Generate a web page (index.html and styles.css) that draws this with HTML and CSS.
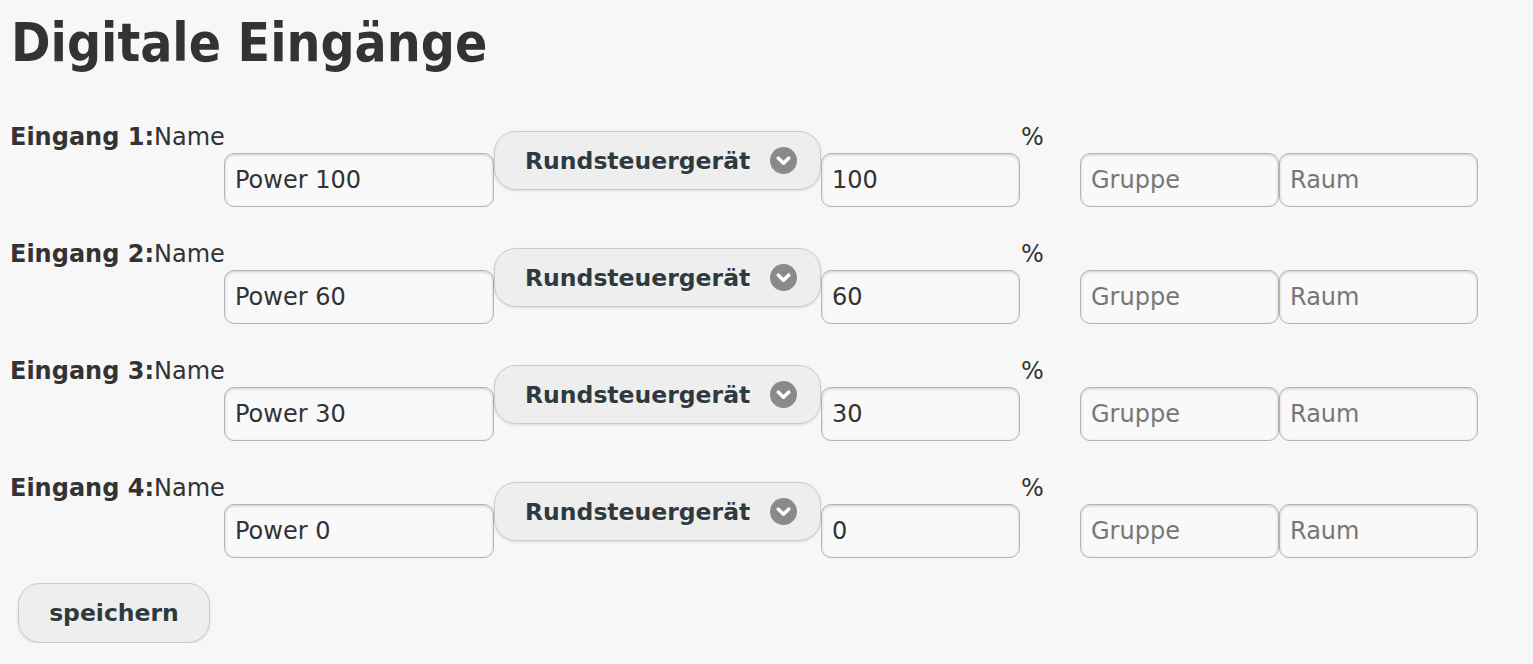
FILE: index.html
```html
<!DOCTYPE html>
<html lang="de">
<head>
<meta charset="utf-8">
<title>Digitale Eingänge</title>
<link rel="stylesheet" href="styles.css">
</head>
<body>
<div class="page">
  <h1 class="title">Digitale Eingänge</h1>
  <form class="rows">
    <div class="row">
      <div class="lbl"><b>Eingang 1:</b>Name</div>
      <input class="field name" type="text" value="Power 100">
      <div class="select"><span class="select-text">Rundsteuergerät</span><svg class="chev" viewBox="0 0 28 28" width="27" height="27"><circle cx="14" cy="14" r="14" fill="#8a8a8a"/><polyline points="8.5,11.5 14,16.8 19.5,11.5" fill="none" stroke="#fff" stroke-width="3.6" stroke-linecap="round" stroke-linejoin="round"/></svg></div>
      <input class="field num" type="text" value="100">
      <span class="pct">%</span>
      <input class="field small" type="text" placeholder="Gruppe">
      <input class="field small" type="text" placeholder="Raum">
    </div>
    <div class="row">
      <div class="lbl"><b>Eingang 2:</b>Name</div>
      <input class="field name" type="text" value="Power 60">
      <div class="select"><span class="select-text">Rundsteuergerät</span><svg class="chev" viewBox="0 0 28 28" width="27" height="27"><circle cx="14" cy="14" r="14" fill="#8a8a8a"/><polyline points="8.5,11.5 14,16.8 19.5,11.5" fill="none" stroke="#fff" stroke-width="3.6" stroke-linecap="round" stroke-linejoin="round"/></svg></div>
      <input class="field num" type="text" value="60">
      <span class="pct">%</span>
      <input class="field small" type="text" placeholder="Gruppe">
      <input class="field small" type="text" placeholder="Raum">
    </div>
    <div class="row">
      <div class="lbl"><b>Eingang 3:</b>Name</div>
      <input class="field name" type="text" value="Power 30">
      <div class="select"><span class="select-text">Rundsteuergerät</span><svg class="chev" viewBox="0 0 28 28" width="27" height="27"><circle cx="14" cy="14" r="14" fill="#8a8a8a"/><polyline points="8.5,11.5 14,16.8 19.5,11.5" fill="none" stroke="#fff" stroke-width="3.6" stroke-linecap="round" stroke-linejoin="round"/></svg></div>
      <input class="field num" type="text" value="30">
      <span class="pct">%</span>
      <input class="field small" type="text" placeholder="Gruppe">
      <input class="field small" type="text" placeholder="Raum">
    </div>
    <div class="row">
      <div class="lbl"><b>Eingang 4:</b>Name</div>
      <input class="field name" type="text" value="Power 0">
      <div class="select"><span class="select-text">Rundsteuergerät</span><svg class="chev" viewBox="0 0 28 28" width="27" height="27"><circle cx="14" cy="14" r="14" fill="#8a8a8a"/><polyline points="8.5,11.5 14,16.8 19.5,11.5" fill="none" stroke="#fff" stroke-width="3.6" stroke-linecap="round" stroke-linejoin="round"/></svg></div>
      <input class="field num" type="text" value="0">
      <span class="pct">%</span>
      <input class="field small" type="text" placeholder="Gruppe">
      <input class="field small" type="text" placeholder="Raum">
    </div>
    <div class="actions">
      <button class="btn" type="button">speichern</button>
    </div>
  </form>
</div>
</body>
</html>
```

FILE: styles.css
```css
html, body {
  margin: 0;
  background: #f7f7f7;
}
body {
  font-family: "DejaVu Sans", Verdana, sans-serif;
  color: #333;
  font-size: 24px;
}
.page {
  padding: 13px 0 0 10px;
}
.title {
  margin: 0 0 0 1px;
  font-family: "DejaVu Sans Condensed", "DejaVu Sans", sans-serif;
  font-weight: bold;
  font-size: 53px;
  line-height: 60px;
  color: #333;
}
.rows {
  margin: 51px 0 0 0;
  display: flex;
  flex-direction: column;
  gap: 34px;
}
.row {
  display: flex;
  align-items: flex-start;
  height: 83px;
}
.lbl {
  width: 214px;
  flex: none;
  line-height: 27px;
  white-space: nowrap;
}
.lbl b {
  font-weight: bold;
}
.field {
  flex: none;
  box-sizing: border-box;
  margin: 29px 0 0 0;
  height: 54px;
  padding: 0 10px;
  border: 1px solid #b4b4b4;
  border-radius: 10px;
  background: #f9f9f9;
  box-shadow: inset 0 1px 3px rgba(0, 0, 0, 0.18);
  font-family: "DejaVu Sans", Verdana, sans-serif;
  font-size: 24px;
  color: #333;
  outline: none;
}
.field::placeholder {
  color: #777;
}
.name {
  width: 270px;
}
.num {
  width: 199px;
}
.small {
  width: 199px;
}
.select {
  flex: none;
  box-sizing: border-box;
  margin-top: 7px;
  width: 327px;
  height: 59px;
  display: flex;
  align-items: center;
  padding: 0 23px 0 30px;
  border: 1px solid #cbcbcb;
  border-radius: 22px;
  background: #eeeeee;
  box-shadow: 0 1px 3px rgba(0, 0, 0, 0.12);
  font-weight: bold;
  font-size: 23.5px;
  color: #2f3a40;
  text-shadow: 0 1px 0 #f5f5f5;
}
.select-text {
  white-space: nowrap;
}
.chev {
  margin-left: auto;
  display: block;
}
.pct {
  flex: none;
  width: 59px;
  padding-left: 1px;
  line-height: 27px;
}
.actions {
  margin-top: -9px;
  padding-left: 8px;
}
.btn {
  box-sizing: border-box;
  width: 192px;
  height: 60px;
  border: 1px solid #cbcbcb;
  border-radius: 22px;
  background: #eeeeee;
  box-shadow: 0 1px 3px rgba(0, 0, 0, 0.12);
  font-family: "DejaVu Sans", Verdana, sans-serif;
  font-weight: bold;
  font-size: 23.5px;
  color: #2f3a40;
  text-shadow: 0 1px 0 #f5f5f5;
  cursor: pointer;
}
```
